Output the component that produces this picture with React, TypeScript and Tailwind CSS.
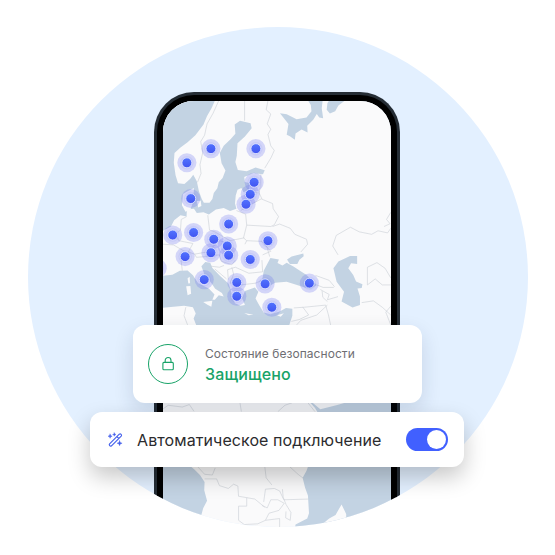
const SEAS = [
  // Norwegian Sea, North Sea and the Baltic
  "M455 280H609L598 305 585 328 575 352 552 382 530 402 510 417 493 432 491 460 496 495 503 518 521 520 537 506 546 494 556 512 562 540 570 562 576 573 592 573 600 562 604 545 614 532 618 515 629 503 637 482 626 461 621 432 632 412 652 393 665 378 663 352 678 341 708 348 711 362 692 386 671 405 669 440 665 458 672 480 697 484 722 473 748 481 743 492 716 489 690 500 692 514 706 518 703 535 688 543 682 531 671 536 666 552 664 575 668 590 650 596 632 588 610 592 590 606 575 600 556 602 548 590 528 592 527 612 510 608 492 622 483 640 455 655Z",
  // Mediterranean
  "M455 780L487 776 508 765 530 764 545 778 560 800 590 815 606 832 600 847 607 847 618 834 632 838 627 828 608 816 596 798 578 776 569 752 580 740 594 742 600 757 622 780 646 802 652 820 656 840 664 857 680 864 692 862 684 842 692 822 720 812 730 824 722 843 732 862 745 883 765 888 790 880 808 870 826 872 826 892 815 925H557L547 900 553 886 545 868 520 864 455 870Z",
  // Black Sea
  "M740 797L745 765 764 729 788 733 784 743 798 750 810 742 829 753 866 777 895 805 876 817 848 808 810 796 777 799 752 814Z",
  "M811 733L824 725 857 716 858 724 846 734 840 746 819 746Z",
  // Caspian Sea
  "M942 758L956 739 989 723H1009V746L992 744 984 758 998 777 1006 795 1024 803 1022 814 1010 815 1017 838V862L996 869 965 852 972 824 951 796Z",
  // White Sea
  "M791 320L810 323 838 337 866 332 880 314 878 297 868 280H912L909 306 913 334 902 332 895 322 885 338 868 355 869 374 852 366 835 377 833 395 819 385 810 381 815 350Z",
  "M925 292L932 280H980L956 298 947 314 932 321 923 310Z",
  // Gulf of Aden
  "M870 1130L883 1138 905 1156 950 1145 985 1135H1110V1170H900L890 1153Z",
  // Atlantic
  "M455 1310H530L550 1327 565 1342 578 1362 577 1385 585 1415 574 1436 567 1462V1510H455Z",
  // Indian Ocean
  "M873 1310L866 1330 855 1350 862 1378 870 1400 873 1450 868 1465 835 1482 830 1510H1110V1310Z",
];

const ISLANDS = [
  "M517 548L530 540 548 531 547 550 554 558 545 572 538 592 524 598 514 580Z",
  "M556 568L567 567 569 582 560 586Z",
  "M574 853L600 850 597 867 586 861Z",
  "M526 809L538 808 540 830 530 834Z",
  "M530 786L536 782 537 800 532 801Z",
  "M690 884L716 889 702 891Z",
  "M783 891L802 885 793 895Z",
  "M912 1480L930 1465 948 1455 965 1425 978 1452 978 1475 968 1510H900Z",
];

const BORDERS = [
  "M620 280L602 320 585 350 578 382 567 400 573 430 565 465 568 490 558 515",
  "M691 280V341M758 280L752 310 765 322 755 350 765 365 757 380 765 412 775 425 766 445 748 475",
  "M737 492V530M700 540L728 545M735 530L732 545 740 562M680 595L705 580 738 562 770 575 772 590 787 612 775 635 765 640 697 636 694 605 668 595",
  "M770 640L790 633 820 645 833 662 866 676 869 690 850 712M697 636L688 672 697 680 692 690",
  "M587 608L592 650 607 655 650 680 690 672M527 612L512 620 510 650 497 660 505 680 545 688 532 712 550 718 585 712 620 680 655 690",
  "M461 690L490 692 530 715 512 738 515 765M550 718L555 727 580 725 620 720 625 738M697 680L740 682 765 710 742 720M740 682L755 700 762 725M740 735L742 768 703 772 665 755 643 762 645 790",
  "M595 752L620 755 633 750M607 760L640 788M655 755L660 775 650 800 680 805 722 800 738 793M625 738L655 748 665 735",
  "M891 778L930 792 945 810M895 805L913 812 943 812M905 818L930 832 925 847 955 838M910 822L912 840 925 852",
  "M830 870L860 868 920 862 928 890 934 918M855 867L872 890 845 903 823 908M925 862L895 890 850 905 838 918",
  "M955 720L940 695 950 665 990 642 1015 655 1050 662 1068 652 1095 658 1104 645M1104 600L1092 620 1102 632 1085 640",
  "M1038 805V755L1065 742 1088 758 1104 785M1038 805L1060 788 1080 805H1104M1022 855L1055 850 1080 868 1104 890M1104 865L1090 882 1104 918",
  "M525 868L520 892 530 918M461 1155L475 1145 515 1150 535 1143 548 1162M678 1138L682 1163M785 1163L805 1145 825 1138M870 1138L890 1163",
  "M558 1318L578 1340 600 1342 608 1322M578 1353H612L620 1372 645 1380 660 1368 672 1373 674 1402 697 1406 720 1410 748 1433M748 1318L752 1350 768 1370",
  "M750 1382L775 1380 790 1387 802 1412 872 1410M697 1406L697 1430 674 1430V1470L690 1482 728 1480 750 1470 760 1450 788 1442 803 1422 785 1412 765 1412 755 1435 740 1428",
  "M798 1382L800 1405 808 1425 822 1448 820 1470 807 1463 808 1445M750 1382L745 1418M750 1470L790 1465V1490M818 1318L842 1340 858 1352",
];

const PINS = [
  [596, 420], [528, 460], [723, 420], [718, 515], [707, 549], [695, 577], [539, 561],
  [646, 633], [547, 657], [488, 664], [604, 676], [642, 695], [757, 680], [596, 714],
  [646, 721], [523, 725], [707, 733], [577, 790], [669, 798], [749, 802], [874, 800],
  [669, 837], [768, 868], [444, 758],
];

function WorldMap() {
  return (
    <svg className="block h-[452px] w-[228px]" viewBox="163 101 228 452" aria-hidden="true">
      <defs>
        <linearGradient id="pin" x1="0" y1="0" x2="0" y2="1">
          <stop offset="0" stopColor="#5273ff" />
          <stop offset="1" stopColor="#4154f1" />
        </linearGradient>
      </defs>
      <rect x="163" y="101" width="228" height="452" fill="#fafafb" />
      <g transform="scale(0.35395)">
        {SEAS.map((d) => <path key={d} d={d} fill="#c3d3e3" />)}
        {ISLANDS.map((d) => <path key={d} d={d} fill="#fafafb" />)}
        {BORDERS.map((d) => (
          <path key={d} d={d} fill="none" stroke="#cdd2d8" strokeWidth="1.8" strokeLinejoin="round" />
        ))}
        {PINS.map(([x, y]) => (
          <g key={`${x}-${y}`}>
            <circle cx={x} cy={y} r="27" fill="#6a72f2" fillOpacity="0.27" />
            <circle cx={x} cy={y} r="19" fill="#6a72f2" fillOpacity="0.1" />
          </g>
        ))}
        {PINS.map(([x, y]) => (
          <circle key={`${x}-${y}`} cx={x} cy={y} r="14" fill="url(#pin)" stroke="#eceeff" strokeWidth="2.2" />
        ))}
      </g>
    </svg>
  );
}

function Phone() {
  return (
    <div className="-ml-px mt-[65px] h-[460px] w-[246px] shrink-0 rounded-t-[40px] border-[4px] border-b-0 border-[#252d35]">
      <div className="-mx-px -mt-px h-full overflow-hidden rounded-t-[37px] border-[6px] border-b-0 border-black">
        <WorldMap />
      </div>
    </div>
  );
}

function LockIcon() {
  return (
    <svg className="h-4 w-4" viewBox="0 0 16 16" fill="none" stroke="#18a368" strokeWidth="1.1">
      <rect x="2.9" y="6.4" width="10.4" height="7.4" rx="1" />
      <path d="M5.2 6.4V4.4a2.9 2.9 0 0 1 5.8 0v2" />
    </svg>
  );
}

function WandIcon() {
  return (
    <svg className="h-4 w-4" viewBox="0 0 16 16" fill="none" stroke="#4460ec" strokeWidth="1.15" strokeLinecap="round" strokeLinejoin="round">
      <path d="M2.6 11.9 12.3 2.2a1.35 1.35 0 0 1 1.9 1.9L4.5 13.8a1.35 1.35 0 0 1-1.9-1.9ZM9.9 4.6l1.9 1.9" />
      <path
        fill="#4460ec"
        strokeWidth="0.4"
        d="M3.1 2.1 3.7 3.6 5.2 4.2 3.7 4.8 3.1 6.3 2.5 4.8 1 4.2 2.5 3.6ZM7.3.8 7.8 2 9 2.5 7.8 3 7.3 4.2 6.8 3 5.6 2.5 6.8 2ZM12.6 8.7 13.3 10.5 15.1 11.2 13.3 11.9 12.6 13.7 11.9 11.9 10.1 11.2 11.9 10.5Z"
      />
    </svg>
  );
}

export default function App() {
  return (
    <main className="relative h-[555px] w-[555px] overflow-hidden bg-white pl-[27.5px] pt-[27px] font-['Inter',sans-serif]">
      <div className="flex h-[500px] w-[500px] items-start justify-center overflow-hidden rounded-full bg-[#e3f0ff]">
        <Phone />
      </div>

      <section className="absolute left-[133px] top-[325px] flex h-[78px] w-[289px] items-center rounded-xl bg-white pl-[15px] shadow-[0_8px_20px_rgba(20,40,80,0.14)]">
        <div className="flex h-10 w-10 items-center justify-center rounded-full border border-[#18a368]">
          <LockIcon />
        </div>
        <div className="ml-[17px] flex flex-col whitespace-nowrap pt-[2px]">
          <span className="text-[12px] leading-[18px] tracking-[0.06px] text-[#6e6e73]">Состояние безопасности</span>
          <span className="text-[16px] font-medium leading-[23px] tracking-[0.16px] text-[#18a368]">Защищено</span>
        </div>
      </section>

      <section className="absolute left-[90px] top-[412px] flex h-[55px] w-[374px] items-center rounded-xl bg-white pl-[17px] pr-4 shadow-[0_10px_22px_rgba(0,0,0,0.22)]">
        <WandIcon />
        <span className="ml-[14px] whitespace-nowrap text-[16px] leading-6 tracking-[0.09px] text-[#2b2b2e]">Автоматическое подключение</span>
        <div className="ml-auto flex h-[23px] w-[42px] items-center justify-end rounded-full bg-[#4160ff] pr-[2px]">
          <div className="h-[19px] w-[19px] rounded-full bg-white" />
        </div>
      </section>
    </main>
  );
}
